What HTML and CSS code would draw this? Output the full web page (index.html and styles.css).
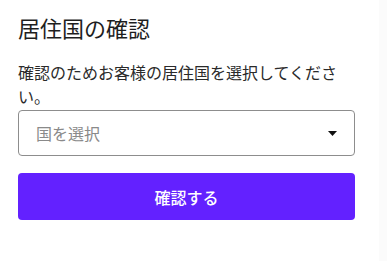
FILE: index.html
```html
<!DOCTYPE html>
<html lang="ja">
<head>
<meta charset="utf-8">
<link rel="stylesheet" href="styles.css">
</head>
<body>
<main class="panel">
  <h1 class="title">居住国の確認</h1>
  <p class="desc">確認のためお客様の居住国を選択してください。</p>
  <div class="select">
    <span class="placeholder">国を選択</span>
    <svg class="caret" width="9" height="5" viewBox="0 0 9 5"><path d="M0 0h9L4.5 5z" fill="#111"/></svg>
  </div>
  <button class="btn">確認する</button>
</main>
</body>
</html>
```
FILE: styles.css
```css
html {
  background: #fbfbfb;
}
body {
  margin: 0;
  width: 379px;
  min-height: 100vh;
  background: #fff;
  font-family: "Noto Sans CJK JP", "Noto Sans", sans-serif;
  color: #222;
}
.panel {
  width: 337px;
  padding: 12px 0 0 18px;
  display: flex;
  flex-direction: column;
}
.title {
  margin: 0;
  font-size: 22px;
  font-weight: 400;
  line-height: 30px;
  color: #1e1e1e;
}
.desc {
  margin: 18px 0 0;
  font-size: 16px;
  line-height: 24px;
  color: #2a2a2a;
}
.select {
  margin-top: 2px;
  height: 46px;
  box-sizing: border-box;
  border: 1px solid #8d8d8d;
  border-radius: 4px;
  display: flex;
  align-items: center;
  justify-content: space-between;
  padding: 0 17px 0 17px;
}
.placeholder {
  font-size: 16px;
  color: #8a8a8a;
}
.caret {
  display: block;
}
.btn {
  margin-top: 17px;
  height: 47px;
  border: 0;
  border-radius: 4px;
  background: #6321ff;
  color: #fff;
  font-family: inherit;
  font-size: 16px;
  font-weight: 500;
}
```
